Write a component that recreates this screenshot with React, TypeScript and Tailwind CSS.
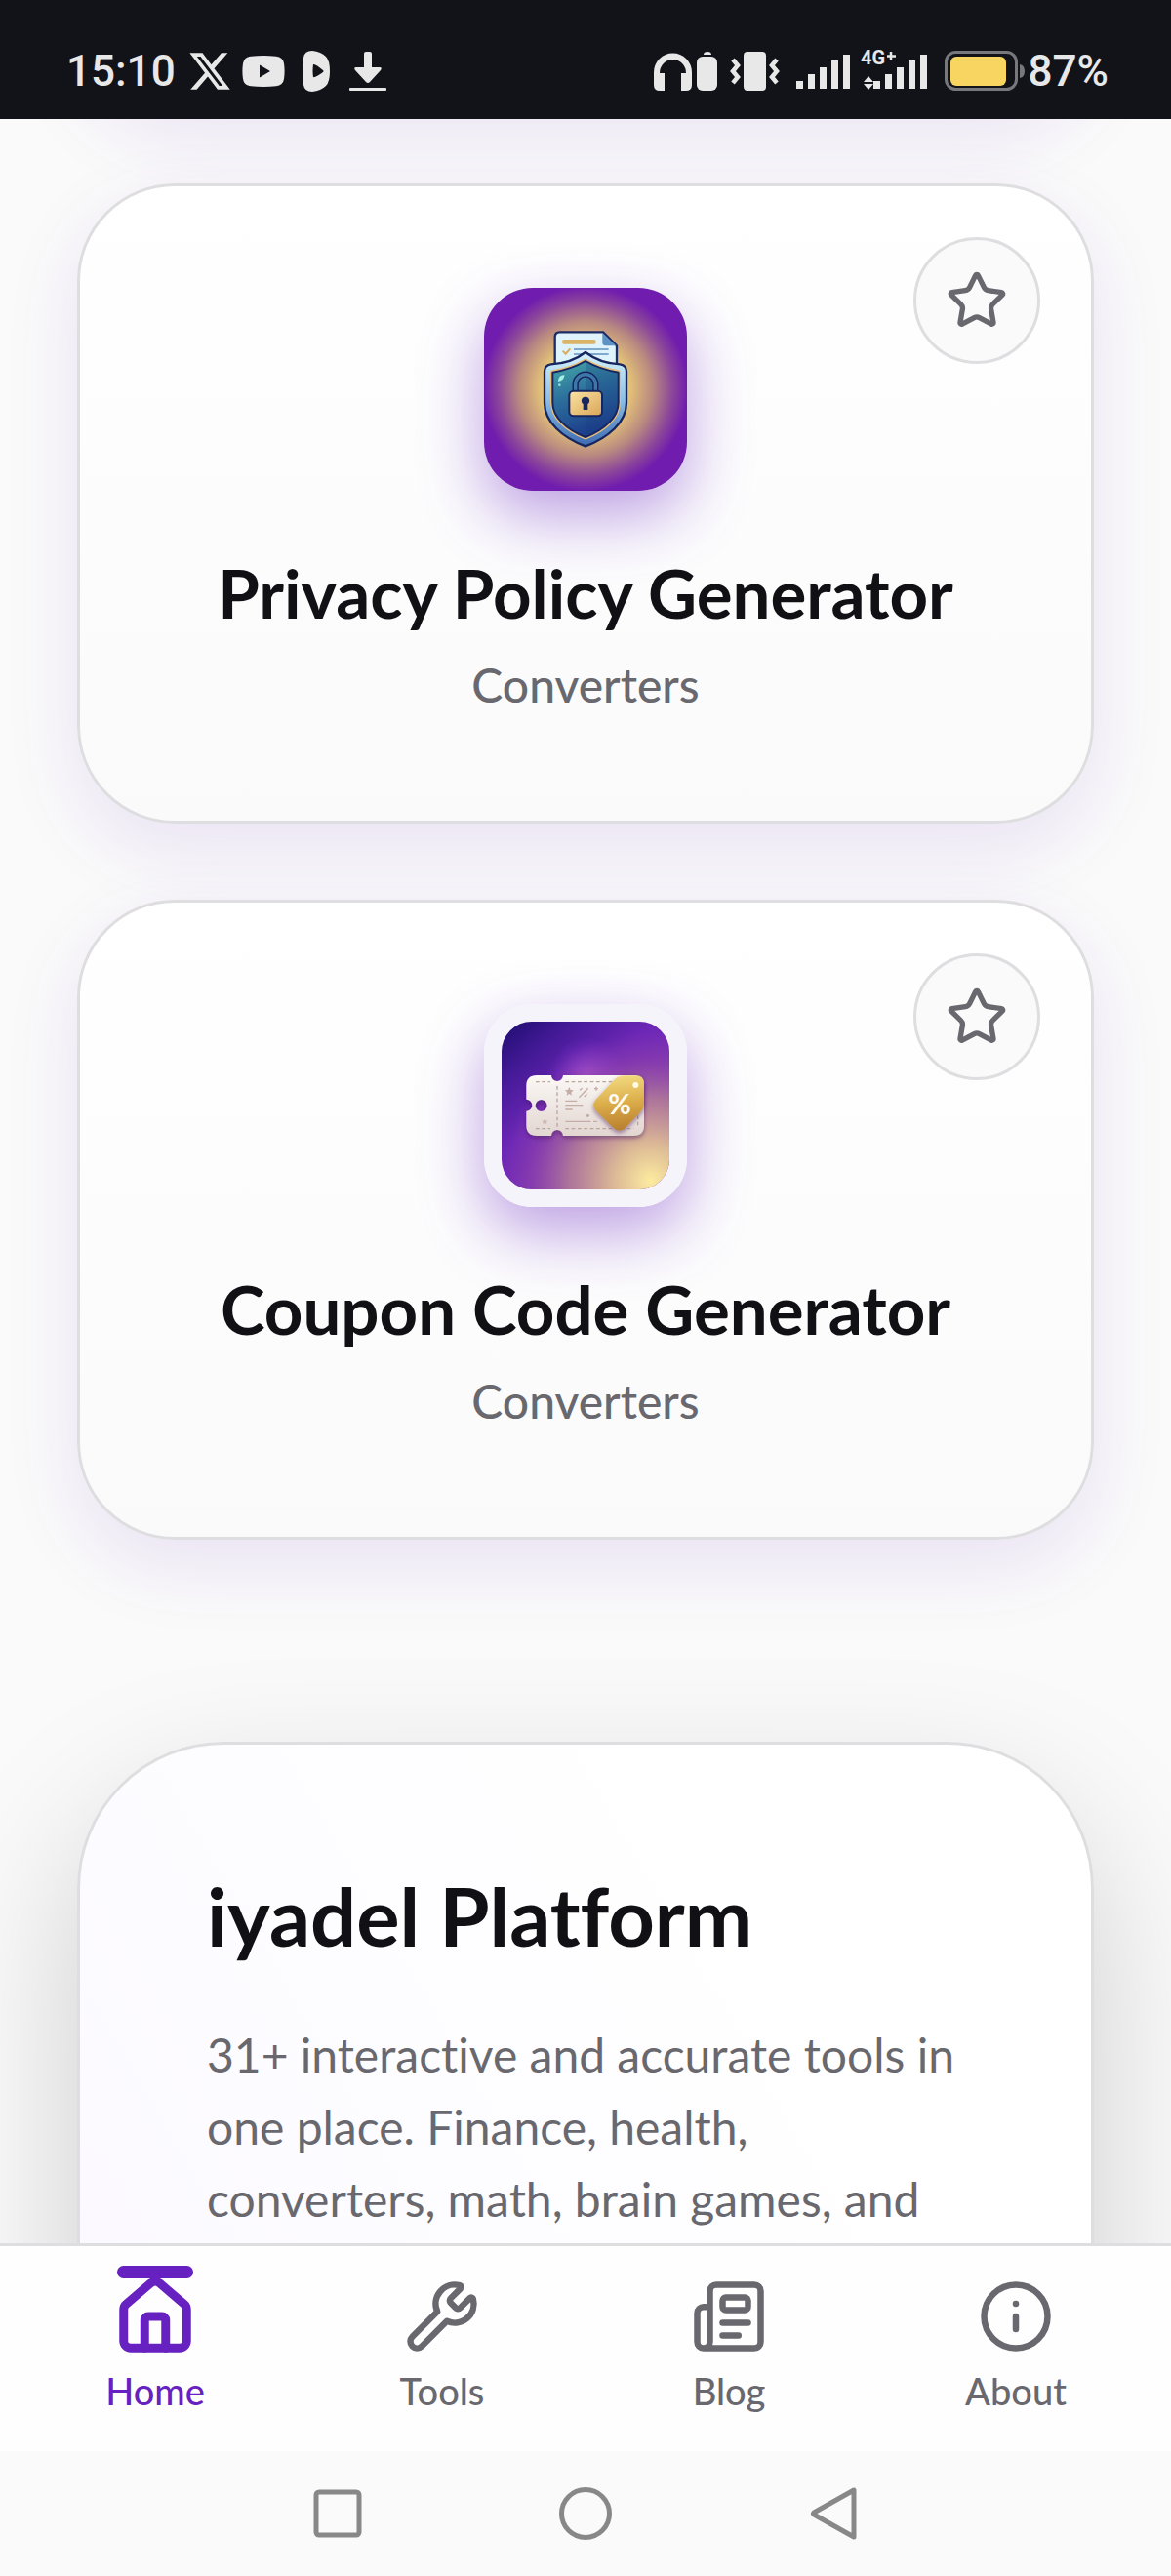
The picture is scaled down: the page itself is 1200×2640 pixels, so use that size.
import type { ReactNode } from 'react';
import { House, Info, Newspaper, Star, Wrench } from 'lucide-react';
import { FaXTwitter } from 'react-icons/fa6';

interface Tool {
  name: string;
  category: string;
  icon: ReactNode;
}

function ShieldIcon() {
  return (
    <svg viewBox="108 105 624 624" className="size-full" aria-hidden="true">
      <defs>
        <radialGradient id="glow" gradientUnits="userSpaceOnUse" cx="420" cy="415" r="315">
          <stop offset="0.3" stopColor="#f5dc7c" />
          <stop offset="0.45" stopColor="#e0bd78" />
          <stop offset="0.65" stopColor="#b98a80" />
          <stop offset="0.85" stopColor="#8b469a" />
          <stop offset="1" stopColor="#701cae" />
        </radialGradient>
        <linearGradient id="rim" x1="0" y1="0" x2="0" y2="1">
          <stop offset="0" stopColor="#d8f3fb" />
          <stop offset="0.5" stopColor="#8cc0e6" />
          <stop offset="1" stopColor="#3c69b0" />
        </linearGradient>
        <linearGradient id="face" x1="0" y1="0" x2="0.3" y2="1">
          <stop offset="0" stopColor="#45aaa8" />
          <stop offset="0.5" stopColor="#2c6f9c" />
          <stop offset="1" stopColor="#1d3f8c" />
        </linearGradient>
        <linearGradient id="brass" x1="0" y1="0" x2="1" y2="1">
          <stop offset="0" stopColor="#fbe3a4" />
          <stop offset="1" stopColor="#d9a557" />
        </linearGradient>
      </defs>
      <rect x="108" y="105" width="624" height="624" fill="url(#glow)" />
      <path d="M326 360V256q0-15 15-15h133l42 42v80z" fill="#def3fb" stroke="#1c2c66" strokeWidth="7" strokeLinejoin="round" />
      <path d="M472 243v30q0 10 10 10h32z" fill="#5f92c4" />
      <rect x="348" y="264" width="104" height="14" rx="6" fill="#dcb467" />
      <path d="M350 299l9 9 14-16" fill="none" stroke="#d9ac60" strokeWidth="6" />
      <path d="M384 294h107M384 309h107" stroke="#7fa9cd" strokeWidth="6" />
      <path
        d="M420 303c28 22 62 35 106 37q20 3 20 22v96c0 60-56 108-126 134c-70-26-126-74-126-134v-96q0-19 20-22c44-2 78-15 106-37z"
        fill="url(#rim)"
        stroke="#17265e"
        strokeWidth="7"
        strokeLinejoin="round"
      />
      <path
        d="M420 330c30 18 60 28 101 35v93c0 44-41 82-101 106c-60-24-101-62-101-106v-93c41-7 71-17 101-35z"
        fill="url(#face)"
        stroke="#e9bd7a"
        strokeWidth="14"
        strokeLinejoin="round"
      />
      <path
        d="M420 330c30 18 60 28 101 35v93c0 44-41 82-101 106c-60-24-101-62-101-106v-93c41-7 71-17 101-35z"
        fill="url(#face)"
        stroke="#17265e"
        strokeWidth="6"
        strokeLinejoin="round"
      />
      <path d="M420 333c30 18 58 26 98 34v91c0 42-38 78-98 102z" fill="#173a80" opacity="0.25" />
      <path d="M338 390q2-14 15-15q-2 14-15 15z" fill="#a5f0e4" stroke="#a5f0e4" strokeWidth="4" />
      <circle cx="340" cy="404" r="4" fill="#8fdcd6" />
      <path d="M389 424v-22a31 31 0 0 1 62 0v22" fill="none" stroke="#17265e" strokeWidth="19" />
      <path d="M389 424v-22a31 31 0 0 1 62 0v22" fill="none" stroke="#3e78ab" strokeWidth="10" />
      <rect x="370" y="422" width="101" height="77" rx="13" fill="url(#brass)" stroke="#17265e" strokeWidth="6" />
      <path d="M420 440a12 12 0 0 1 7 22v18h-14v-18a12 12 0 0 1 7-22z" fill="#17265e" />
    </svg>
  );
}

function CouponIcon() {
  return (
    <svg viewBox="108 117 624 624" className="size-full" aria-hidden="true">
      <defs>
        <linearGradient id="night" x1="0" y1="0" x2="0.6" y2="0.7">
          <stop offset="0" stopColor="#1d0d70" />
          <stop offset="0.3" stopColor="#451a98" />
          <stop offset="0.65" stopColor="#6d27b6" />
          <stop offset="1" stopColor="#7a30b4" />
        </linearGradient>
        <radialGradient id="sun" gradientUnits="userSpaceOnUse" cx="620" cy="660" r="460">
          <stop offset="0" stopColor="#fdec9f" />
          <stop offset="0.25" stopColor="#e0bf94" stopOpacity="0.95" />
          <stop offset="0.55" stopColor="#b98494" stopOpacity="0.8" />
          <stop offset="0.8" stopColor="#9648a8" stopOpacity="0.5" />
          <stop offset="1" stopColor="#8a3cae" stopOpacity="0" />
        </radialGradient>
        <radialGradient id="halo" gradientUnits="userSpaceOnUse" cx="425" cy="340" r="120">
          <stop offset="0" stopColor="#b560d8" stopOpacity="0.8" />
          <stop offset="1" stopColor="#8a35cc" stopOpacity="0" />
        </radialGradient>
        <linearGradient id="paper" x1="0" y1="0" x2="0" y2="1">
          <stop offset="0" stopColor="#fbf8f5" />
          <stop offset="1" stopColor="#e2d6d1" />
        </linearGradient>
        <linearGradient id="tag" x1="0.3" y1="0" x2="0.4" y2="1">
          <stop offset="0" stopColor="#f3dc82" />
          <stop offset="0.5" stopColor="#dcae4b" />
          <stop offset="1" stopColor="#b97f2e" />
        </linearGradient>
        <filter id="drop" x="-10%" y="-10%" width="120%" height="130%">
          <feDropShadow dx="0" dy="7" stdDeviation="6" floodColor="#3a1258" floodOpacity="0.5" />
        </filter>
      </defs>
      <rect x="108" y="117" width="624" height="624" fill="#f5f4fa" />
      <rect x="162" y="171" width="516" height="516" rx="92" fill="url(#night)" />
      <rect x="162" y="171" width="516" height="516" rx="92" fill="url(#halo)" />
      <rect x="162" y="171" width="516" height="516" rx="92" fill="url(#sun)" />
      <path
        fillRule="evenodd"
        filter="url(#drop)"
        fill="url(#paper)"
        d="M270 336h45a18 18 0 0 0 36 0h217q32 0 32 32v122q0 32-32 32H351a18 18 0 0 0-36 0h-45q-32 0-32-32v-44a18 18 0 0 0 0-36v-42q0-32 32-32zM284 411a18 18 0 1 0 0 36a18 18 0 0 0 0-36z"
      />
      <path
        d="M267 356h45M358 356h150M267 500h45M358 500h210M333 369v125M581 490v-35"
        fill="none"
        stroke="#b9a59c"
        strokeWidth="4"
        strokeDasharray="11 8"
      />
      <path d="M370 372l4 9 9 1-7 7 2 9-8-5-8 5 2-9-7-7 9-1z" fill="#c4ada4" />
      <path d="M295 470l3 5 6 1-4 4 1 6-6-3-6 3 1-6-4-4 6-1z" fill="#cdb9b1" />
      <path d="M400 404l28-28M402 382l8-6M416 402l9-8M447 377h12M453 371v12" stroke="#c4ada4" strokeWidth="4" />
      <path d="M358 415h36M358 428h54M358 441h22M358 478h78M444 478h12" stroke="#c4ada4" strokeWidth="4" />
      <circle cx="427" cy="460" r="5" fill="#c4ada4" />
      <path
        filter="url(#drop)"
        fill="url(#tag)"
        d="M540 337h35q25 0 25 25v60q0 16-12 28l-46 48q-18 16-36 0l-52-50q-18-20-2-38l56-60q14-13 32-13z"
      />
      <circle cx="574" cy="366" r="9" fill="#fffbe9" />
      <text x="525" y="456" textAnchor="middle" fontFamily="Lato, sans-serif" fontWeight="700" fontSize="86" fill="#fffaf0">
        %
      </text>
    </svg>
  );
}

const tools: Tool[] = [
  { name: 'Privacy Policy Generator', category: 'Converters', icon: <ShieldIcon /> },
  { name: 'Coupon Code Generator', category: 'Converters', icon: <CouponIcon /> },
];

const links = [
  { label: 'Home', Icon: House, active: true },
  { label: 'Tools', Icon: Wrench, active: false },
  { label: 'Blog', Icon: Newspaper, active: false },
  { label: 'About', Icon: Info, active: false },
];

function StatusBar() {
  return (
    <header className="flex h-[122px] shrink-0 items-end justify-between bg-[#121319] px-16 pb-6 font-[Roboto,sans-serif] text-[#e8e8e8]">
      <div className="flex h-[50px] items-center pl-1">
        <span className="text-[44px] leading-[50px] font-medium">15:10</span>
        <FaXTwitter className="ml-3 size-[46px]" />
        <svg viewBox="0 0 44 32" className="ml-[10px] h-8 w-11" fill="currentColor">
          <path fillRule="evenodd" d="M9 .8Q22-.6 35 .8q7 .7 8 7.2q1.200 8 0 16q-1 6.500-8 7.200q-13 1.400-26 0Q2 30.500 1 24q-1.200-8 0-16Q2 1.500 9 .8zM18 9.500v13L29 16z" />
        </svg>
        <svg viewBox="0 0 28 42" className="ml-[18px] h-[42px] w-7" fill="currentColor">
          <path fillRule="evenodd" d="M1 7q1-7 9-7q9 1 14 6q4 4 4 15t-4 15q-5 5-14 6q-8 0-9-7Q-.5 21 1 7zM11 14q-1 7 0 13q2 1 10-5q1-1 0-2q-8-7-10-6z" />
        </svg>
        <svg viewBox="0 0 38 40" className="ml-5 h-10 w-[38px]" fill="currentColor">
          <path d="M15 2q0-2 2-2h4q2 0 2 2v14h8q3 0 1 3L21 31q-2 2-4 0L6 19q-2-3 1-3h8z" />
          <rect y="37" width="38" height="3" rx="1" />
        </svg>
      </div>
      <div className="flex h-[50px] items-center">
        <svg viewBox="0 -9 282 60" className="h-[60px] w-[282px]" fill="currentColor">
          <path d="M0 22a19.500 19.500 0 0 1 39 0v13q0 6-6 6h-5V23h5a13.500 14 0 0 0-27 0h5v18H6q-6 0-6-6z" />
          <path d="M51 4q0-3 4-3t4 3z" />
          <rect x="44" y="6" width="21" height="35" rx="6" />
          <rect x="92" y="1" width="23" height="40" rx="4" />
          <path d="M81 9l5 6-5 6 5 6-5 6M126 9l-5 6 5 6-5 6 5 6" fill="none" stroke="currentColor" strokeWidth="4.500" />
          <path d="M146 31h7v8h-7zM158 24h7v15h-7zM170 17h7v22h-7zM182 10h7v29h-7zM194 4h7v35h-7z" />
          <path d="M225 31h7v8h-7zM237 24h7v15h-7zM249 17h7v22h-7zM261 10h7v29h-7zM273 4h7v35h-7z" />
          <path d="M215 32l5-6 5 6zM215 34h10l-5 6z" />
          <text x="212" y="14" fontSize="20" fontWeight="700">4G</text>
          <path d="M243 1v9M239 5.500h9" stroke="currentColor" strokeWidth="2.500" />
        </svg>
        <svg viewBox="0 0 82 42" className="ml-4 h-[42px] w-[82px]">
          <rect x="1.500" y="1.500" width="72" height="38" rx="10" fill="none" stroke="#77787c" strokeWidth="3" />
          <rect x="6" y="6" width="57" height="30" rx="6" fill="#f8d560" />
          <path d="M77 14q5 1 5 7t-5 7z" fill="#77787c" />
        </svg>
        <span className="ml-1 text-[44px] leading-[50px] font-medium">87%</span>
      </div>
    </header>
  );
}

function ToolCard({ name, category, icon }: Tool) {
  return (
    <article className="relative flex flex-col items-center rounded-[100px] border-3 border-[#dedee1] bg-linear-to-b from-white to-[#fafafb] pt-[104px] pb-[111px] shadow-[0_26px_78px_rgba(102,33,192,0.11)]">
      <button
        type="button"
        aria-label={`Add ${name} to favorites`}
        className="absolute top-[52px] right-[52px] flex size-[130px] items-center justify-center rounded-full border-3 border-[#dedee1] bg-[#fafafa] text-[#68686e]"
      >
        <Star className="size-16" />
      </button>
      <div className="size-[208px] overflow-hidden rounded-[50px] shadow-[0_26px_65px_rgba(102,33,192,0.42)]">{icon}</div>
      <h3 className="mt-16 text-[69px] leading-[82px] font-bold text-[#111115]">{name}</h3>
      <p className="mt-6 text-[48px] leading-[57px] font-medium text-[#68686e]">{category}</p>
    </article>
  );
}

function BottomNav() {
  return (
    <nav className="relative grid h-[213px] shrink-0 grid-cols-4 border-t-3 border-[#dedee1] bg-[#fefefe] px-3">
      {links.map(({ label, Icon, active }) => (
        <a
          key={label}
          href="#"
          className={`relative flex flex-col items-center pt-8 ${active ? 'text-[#6621c0]' : 'text-[#68686e]'}`}
        >
          {active && <span className="absolute top-5 h-[13px] w-[78px] rounded-full bg-current" />}
          <span className="flex size-20 items-center justify-center">
            <Icon className={active ? 'size-[86px] shrink-0' : 'size-[78px]'} strokeWidth={active ? 2.5 : 2} />
          </span>
          <span className="mt-3 text-[38px] leading-[48px] font-medium">{label}</span>
        </a>
      ))}
    </nav>
  );
}

function SystemNav() {
  return (
    <footer className="flex h-32 shrink-0 items-center justify-center gap-[200px] bg-[#fafafa] text-[#888]">
      <button type="button" aria-label="Recent apps">
        <svg viewBox="0 0 54 54" className="size-[54px]" fill="none" stroke="currentColor" strokeWidth="5">
          <rect x="5" y="5" width="44" height="44" rx="3" />
        </svg>
      </button>
      <button type="button" aria-label="Home screen">
        <svg viewBox="0 0 54 54" className="size-[54px]" fill="none" stroke="currentColor" strokeWidth="5">
          <circle cx="27" cy="27" r="24.500" />
        </svg>
      </button>
      <button type="button" aria-label="Back">
        <svg viewBox="0 0 54 54" className="size-[54px]" fill="none" stroke="currentColor" strokeWidth="5" strokeLinejoin="round">
          <path d="M48 3v48L7 28q-1-1 0-2z" />
        </svg>
      </button>
    </footer>
  );
}

export default function App() {
  return (
    <div className="flex h-screen flex-col bg-[#fafafa] font-[Lato,sans-serif] [font-variant-ligatures:none]">
      <StatusBar />
      <main className="flex-1 overflow-hidden px-[79px]">
        {/* bottom of the card that is scrolled under the status bar */}
        <div className="-mt-[220px] h-52 rounded-[100px] shadow-[0_26px_78px_rgba(102,33,192,0.11)]" />
        <div className="mt-[78px] flex flex-col gap-[78px]">
          {tools.map((tool) => (
            <ToolCard key={tool.name} {...tool} />
          ))}
        </div>
        <section className="mt-[207px] h-[900px] rounded-[150px] border-3 border-[#dedee1] bg-linear-[60deg] from-[#faf8ff] to-white to-70% px-[130px] pt-[125px] shadow-[0_65px_156px_rgba(0,0,0,0.18)]">
          <h2 className="text-[83px] leading-[100px] font-bold text-[#111115]">iyadel Platform</h2>
          <p className="mt-[56px] text-[48px] leading-[74px] text-[#68686e]">
            31+ interactive and accurate tools in one place. Finance, health, converters, math, brain games, and
          </p>
        </section>
      </main>
      <BottomNav />
      <SystemNav />
    </div>
  );
}
